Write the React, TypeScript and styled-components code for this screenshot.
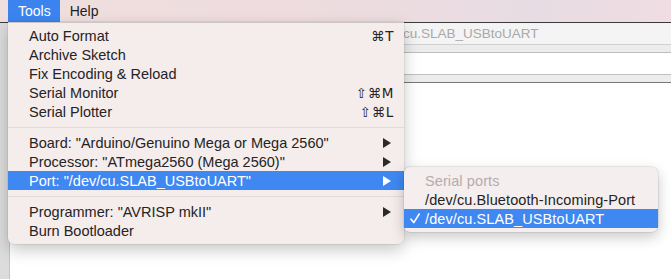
import React from "react";
import styled, { createGlobalStyle } from "styled-components";

const Global = createGlobalStyle`
  html, body { margin: 0; padding: 0; background: #ffffff; }
  body { font-family: "Liberation Sans", Helvetica, Arial, sans-serif; }
`;

const Screen = styled.div`
  position: relative;
  width: 671px;
  height: 279px;
  overflow: hidden;
  background: #ffffff;
  display: flex;
  flex-direction: column;
`;

const MenuBar = styled.div`
  height: 22px;
  flex: none;
  display: flex;
  align-items: stretch;
  padding-left: 8px;
  background: linear-gradient(90deg, #f0dfdf 0%, #eedcde 45%, #e8dce4 80%, #efdde2 100%);
  border-bottom: 1px solid #3a3a3a;
  font-size: 14px;
`;

const MenuTitle = styled.div<{ $active?: boolean }>`
  padding: 0 9px 0 10px;
  line-height: 22px;
  color: ${(p) => (p.$active ? "#ffffff" : "#1e1e1e")};
  background: ${(p) => (p.$active ? "#3b84ef" : "transparent")};
`;

const Desktop = styled.div`
  flex: 1;
  display: flex;
`;

const LeftStrip = styled.div`
  width: 9px;
  flex: none;
  background: #dcdcdc;
  border-right: 1px solid #c4c4c4;
`;

const Window = styled.div`
  flex: 1;
  display: flex;
  flex-direction: column;
  background: #ffffff;
`;

const TitleBar = styled.div`
  height: 21px;
  flex: none;
  background: #f4f4f4;
  border-bottom: 1px solid #d0d0d0;
  color: #a9a9a9;
  font-size: 13.5px;
  line-height: 22px;
  padding-left: 393px;
  white-space: nowrap;
`;

const Band = styled.div<{ $h: number; $bg: string; $line: string }>`
  height: ${(p) => p.$h}px;
  flex: none;
  background: ${(p) => p.$bg};
  border-bottom: 1px solid ${(p) => p.$line};
`;

const Body = styled.div`
  flex: 1;
  background: #ffffff;
`;

const Dropdown = styled.div`
  position: absolute;
  left: 8px;
  top: 22px;
  width: 396px;
  padding: 3px 0 4px;
  background: #f5ecec;
  border-top: 1px solid #cfc6c6;
  border-radius: 0 0 6px 6px;
  box-shadow: 0 6px 16px rgba(0, 0, 0, 0.22), 0 0 0 0.5px rgba(0, 0, 0, 0.12);
  font-size: 14.5px;
  color: #242424;
  z-index: 2;
`;

const Submenu = styled.div`
  position: absolute;
  left: 404px;
  top: 167px;
  width: 254px;
  padding: 4px 0;
  background: #f5eeee;
  border-radius: 6px;
  box-shadow: 0 5px 14px rgba(0, 0, 0, 0.22), 0 0 0 0.5px rgba(0, 0, 0, 0.14);
  font-size: 14.5px;
  letter-spacing: 0.1px;
  color: #242424;
  z-index: 3;
`;

const Item = styled.div<{ $selected?: boolean; $disabled?: boolean }>`
  height: 19px;
  display: flex;
  align-items: center;
  padding: 0 10px 0 21px;
  white-space: nowrap;
  background: ${(p) => (p.$selected ? "#3f87f1" : "transparent")};
  color: ${(p) => (p.$selected ? "#ffffff" : p.$disabled ? "#b3acac" : "#242424")};
`;

const SubItem = styled(Item)`
  padding: 0 8px 0 6px;
`;

const CheckBox = styled.span`
  width: 15px;
  flex: none;
  display: flex;
  align-items: center;
`;

const Label = styled.span`
  flex: 1;
`;

const Shortcut = styled.span`
  font-family: "DejaVu Sans", "Liberation Sans", sans-serif;
  font-size: 13.5px;
  letter-spacing: 0.6px;
`;

const Arrow = styled.svg`
  width: 8px;
  height: 10px;
  margin-right: 3px;
`;

const Separator = styled.div`
  height: 1px;
  margin: 6px 0 5px;
  background: #e2d9d9;
`;

const SubArrow = ({ color }: { color: string }) => (
  <Arrow viewBox="0 0 8 10">
    <path d="M0 0 L8 5 L0 10 Z" fill={color} />
  </Arrow>
);

const CheckMark = () => (
  <svg width="10" height="11" viewBox="0 0 10 11">
    <path d="M1 6.2 L3.8 9.6 L9.2 1" fill="none" stroke="#ffffff" strokeWidth="1.6" strokeLinecap="round" strokeLinejoin="round" />
  </svg>
);

export default function App() {
  return (
    <>
      <Global />
      <Screen>
        <MenuBar>
          <MenuTitle $active>Tools</MenuTitle>
          <MenuTitle>Help</MenuTitle>
        </MenuBar>
        <Desktop>
          <LeftStrip />
          <Window>
            <TitleBar>cu.SLAB_USBtoUART</TitleBar>
            <Band $h={7} $bg="#ececec" $line="#bdbdbd" />
            <Band $h={21} $bg="#ffffff" $line="#c0c0c0" />
            <Band $h={7} $bg="#ececec" $line="#777777" />
            <Body />
          </Window>
        </Desktop>

        <Dropdown>
          <Item>
            <Label>Auto Format</Label>
            <Shortcut>⌘T</Shortcut>
          </Item>
          <Item>
            <Label>Archive Sketch</Label>
          </Item>
          <Item>
            <Label>Fix Encoding &amp; Reload</Label>
          </Item>
          <Item>
            <Label>Serial Monitor</Label>
            <Shortcut>⇧⌘M</Shortcut>
          </Item>
          <Item>
            <Label>Serial Plotter</Label>
            <Shortcut>⇧⌘L</Shortcut>
          </Item>
          <Separator />
          <Item>
            <Label>Board: "Arduino/Genuino Mega or Mega 2560"</Label>
            <SubArrow color="#2a2a2a" />
          </Item>
          <Item>
            <Label>Processor: "ATmega2560 (Mega 2560)"</Label>
            <SubArrow color="#2a2a2a" />
          </Item>
          <Item $selected>
            <Label>Port: "/dev/cu.SLAB_USBtoUART"</Label>
            <SubArrow color="#ffffff" />
          </Item>
          <Separator />
          <Item>
            <Label>Programmer: "AVRISP mkII"</Label>
            <SubArrow color="#2a2a2a" />
          </Item>
          <Item>
            <Label>Burn Bootloader</Label>
          </Item>
        </Dropdown>

        <Submenu>
          <SubItem $disabled>
            <CheckBox />
            <Label>Serial ports</Label>
          </SubItem>
          <SubItem>
            <CheckBox />
            <Label>/dev/cu.Bluetooth-Incoming-Port</Label>
          </SubItem>
          <SubItem $selected>
            <CheckBox>
              <CheckMark />
            </CheckBox>
            <Label>/dev/cu.SLAB_USBtoUART</Label>
          </SubItem>
        </Submenu>
      </Screen>
    </>
  );
}
